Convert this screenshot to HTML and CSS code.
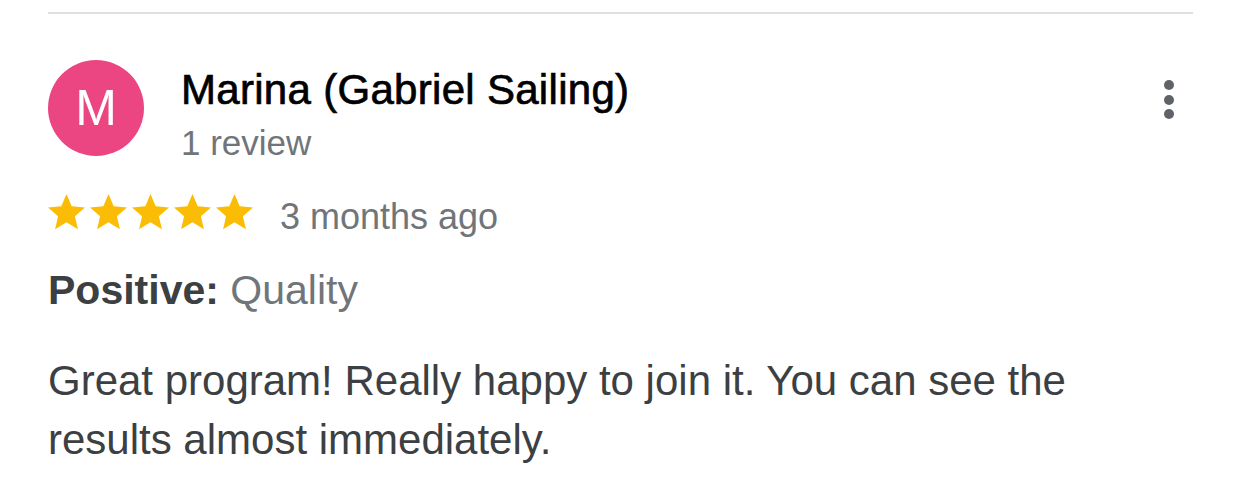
FILE: index.html
```html
<!DOCTYPE html>
<html lang="en">
<head>
<meta charset="utf-8">
<title>Review</title>
<link rel="stylesheet" href="styles.css">
</head>
<body>
<div class="review">
  <div class="divider"></div>
  <div class="header">
    <div class="avatar">M</div>
    <div class="author">
      <div class="name">Marina (Gabriel Sailing)</div>
      <div class="count">1 review</div>
    </div>
    <div class="menu" aria-label="More options">
      <span class="dot"></span>
      <span class="dot"></span>
      <span class="dot"></span>
    </div>
  </div>
  <div class="rating">
    <div class="stars">
      <svg class="star" viewBox="2 2 20 20"><path d="M12 17.27L18.18 21l-1.64-7.03L22 9.24l-7.19-.61L12 2 9.19 8.63 2 9.24l5.46 4.73L5.82 21z"/></svg>
      <svg class="star" viewBox="2 2 20 20"><path d="M12 17.27L18.18 21l-1.64-7.03L22 9.24l-7.19-.61L12 2 9.19 8.63 2 9.24l5.46 4.73L5.82 21z"/></svg>
      <svg class="star" viewBox="2 2 20 20"><path d="M12 17.27L18.18 21l-1.64-7.03L22 9.24l-7.19-.61L12 2 9.19 8.63 2 9.24l5.46 4.73L5.82 21z"/></svg>
      <svg class="star" viewBox="2 2 20 20"><path d="M12 17.27L18.18 21l-1.64-7.03L22 9.24l-7.19-.61L12 2 9.19 8.63 2 9.24l5.46 4.73L5.82 21z"/></svg>
      <svg class="star" viewBox="2 2 20 20"><path d="M12 17.27L18.18 21l-1.64-7.03L22 9.24l-7.19-.61L12 2 9.19 8.63 2 9.24l5.46 4.73L5.82 21z"/></svg>
    </div>
    <span class="time">3 months ago</span>
  </div>
  <p class="highlight"><strong>Positive:</strong> <span class="tag">Quality</span></p>
  <p class="text">Great program! Really happy to join it. You can see the results almost immediately.</p>
</div>
</body>
</html>
```
FILE: styles.css
```css
html, body {
  margin: 0;
  padding: 0;
  background: #ffffff;
}

body {
  font-family: "Liberation Sans", Arial, Helvetica, sans-serif;
}

.review {
  width: 1145px;
  margin-left: 48px;
  padding-top: 12px;
}

.divider {
  height: 2px;
  background: #dfe0e2;
}

.header {
  display: flex;
  align-items: flex-start;
  margin-top: 46px;
}

.avatar {
  flex: none;
  width: 96px;
  height: 96px;
  border-radius: 50%;
  background: #eb4682;
  color: #ffffff;
  font-size: 50px;
  line-height: 96px;
  text-align: center;
}

.author {
  flex: 1;
  margin-left: 37px;
  padding-top: 6px;
}

.name {
  font-size: 42px;
  line-height: 48px;
  letter-spacing: 0.3px;
  color: #000000;
  -webkit-text-stroke: 0.7px #000000;
}

.count {
  margin-top: 9px;
  font-size: 35px;
  line-height: 40px;
  color: #70757a;
}

.menu {
  flex: none;
  display: flex;
  flex-direction: column;
  gap: 4.5px;
  margin-top: 20px;
  margin-right: 19px;
}

.dot {
  display: block;
  width: 10px;
  height: 10px;
  border-radius: 50%;
  background: #5f6368;
}

.rating {
  display: flex;
  align-items: flex-start;
  margin-top: 31px;
}

.stars {
  display: flex;
  gap: 5px;
}

.star {
  width: 37px;
  height: 37px;
  fill: #fbbc05;
}

.time {
  margin-left: 27px;
  margin-top: 3px;
  font-size: 36px;
  line-height: 40px;
  color: #70757a;
}

.highlight {
  margin: 29px 0 0;
  font-size: 41px;
  line-height: 48px;
  color: #70757a;
}

.highlight strong {
  color: #3c4043;
  font-weight: bold;
}

.text {
  margin: 37px 0 0;
  font-size: 42px;
  line-height: 59px;
  color: #3c4043;
}
```
